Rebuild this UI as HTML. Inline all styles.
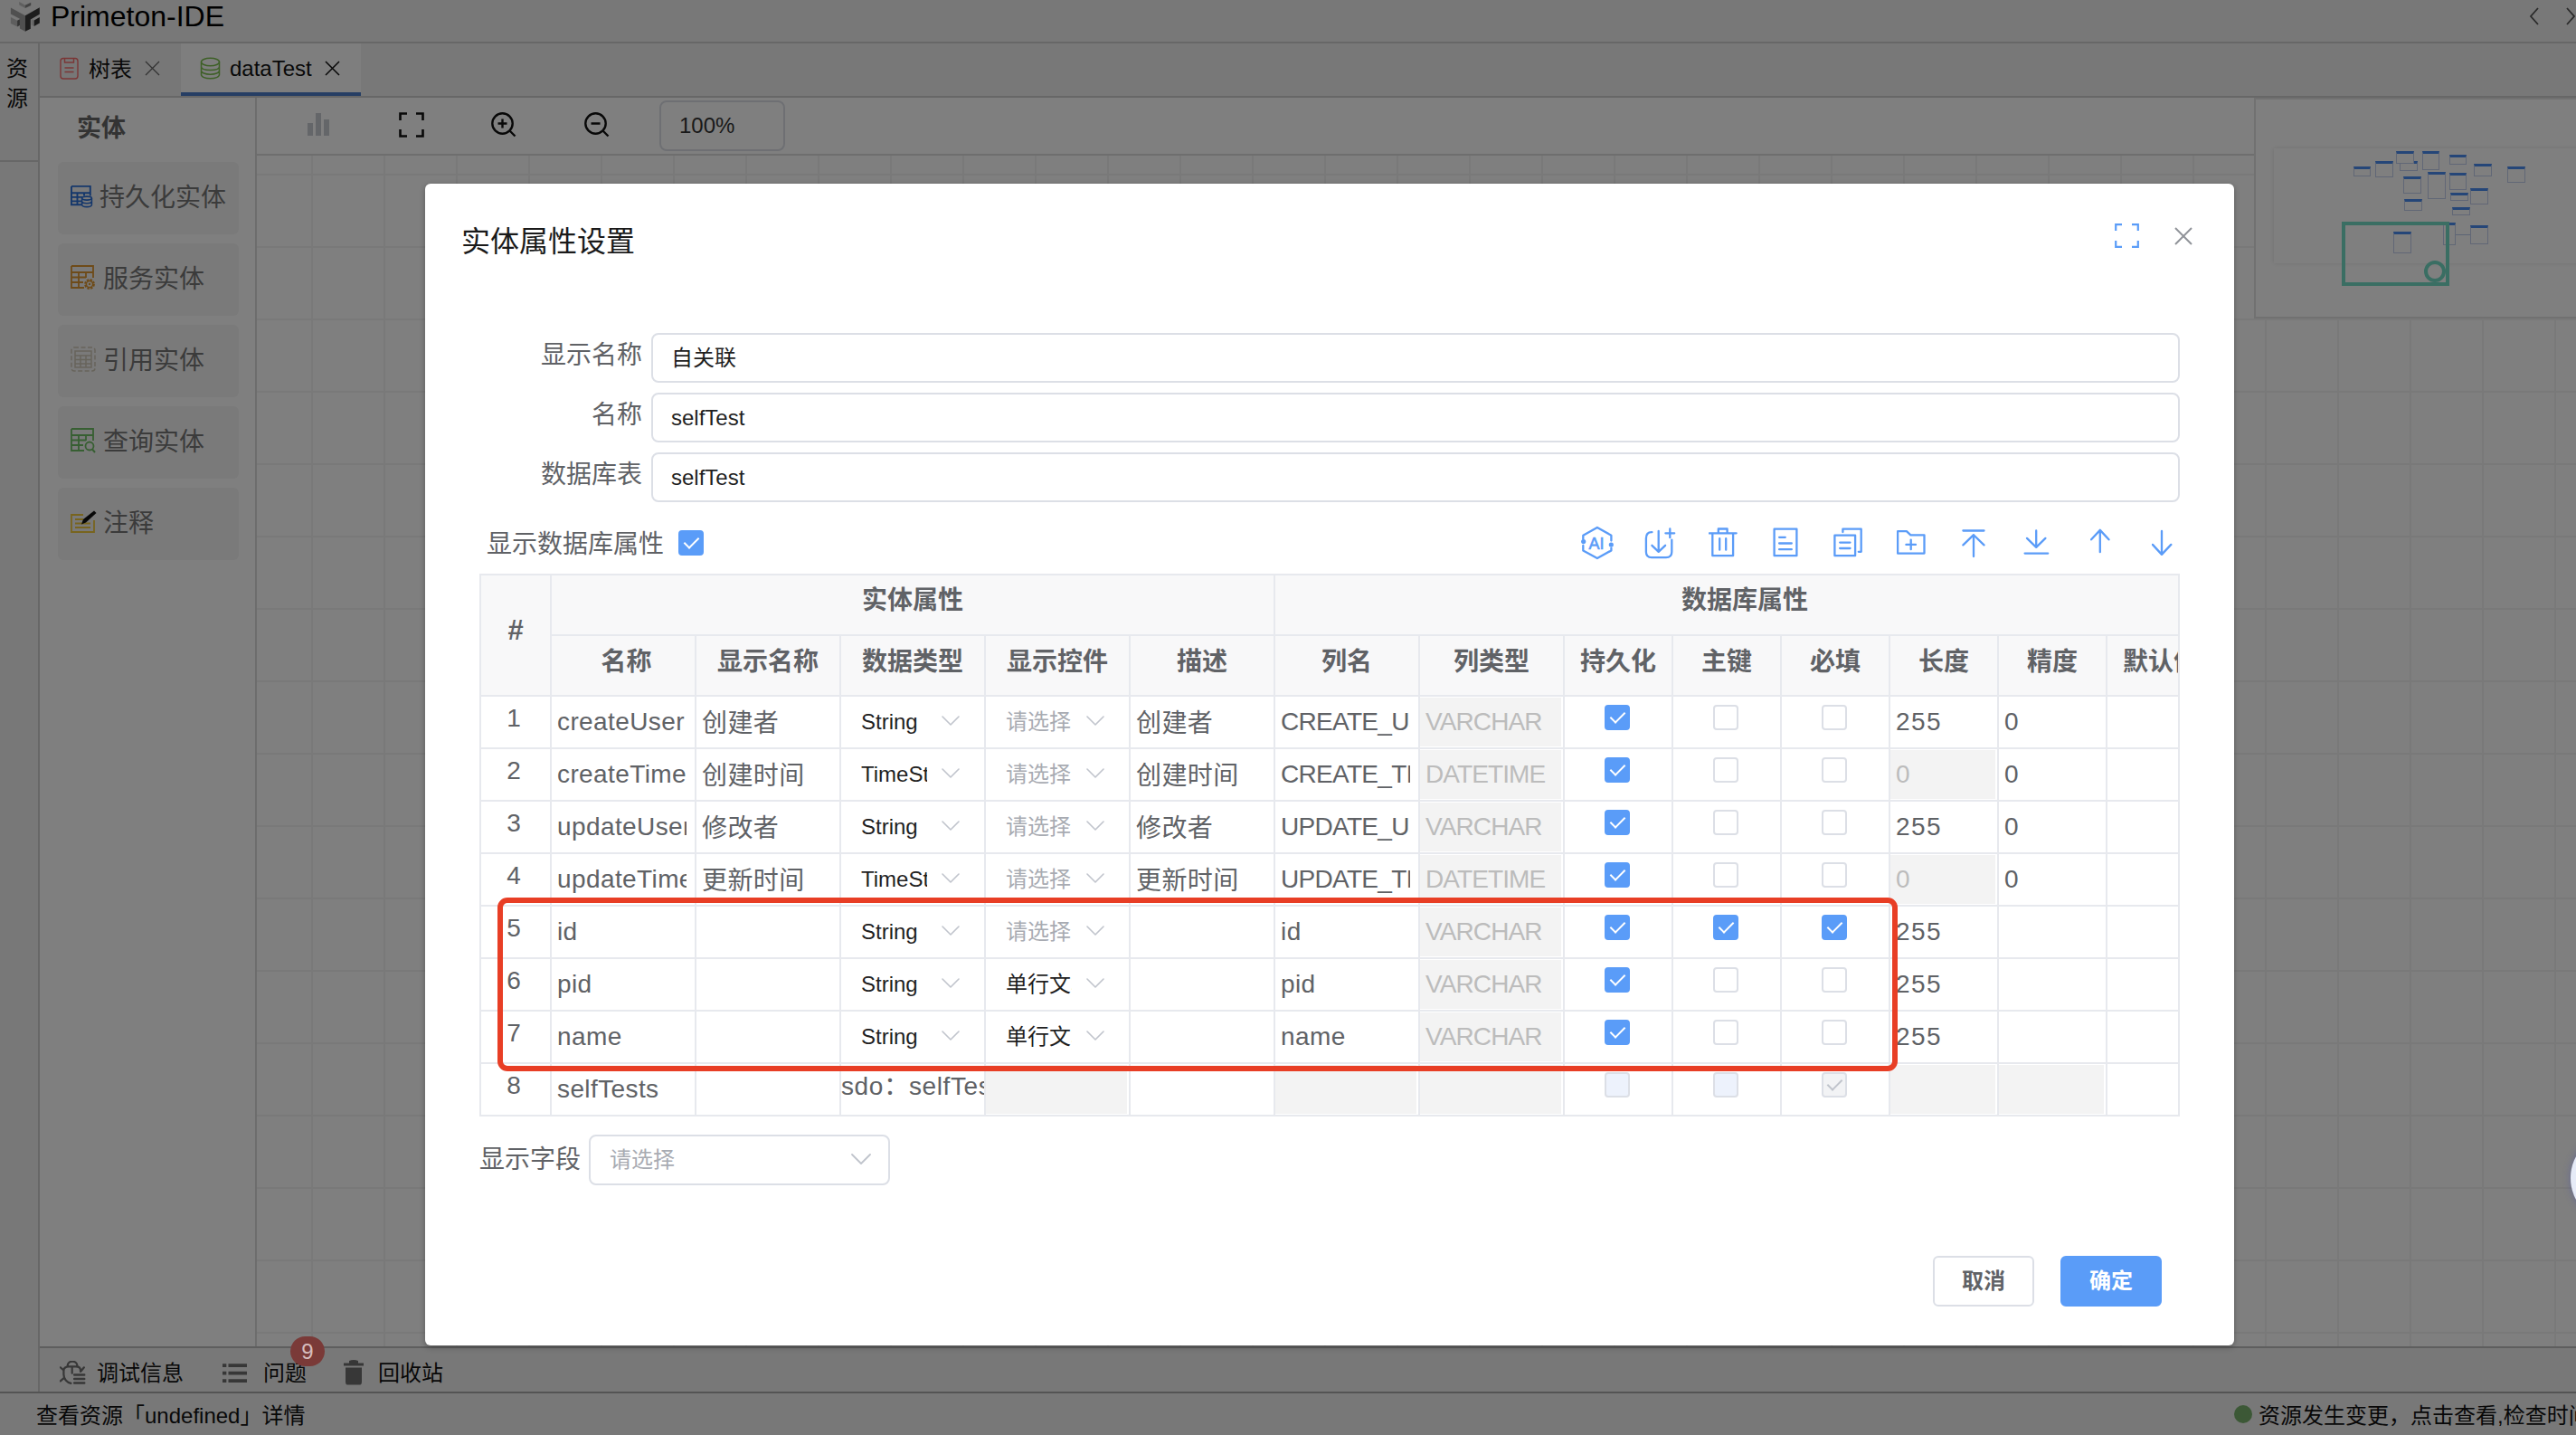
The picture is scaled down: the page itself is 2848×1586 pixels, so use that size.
<!DOCTYPE html>
<html lang="zh-CN"><head><meta charset="utf-8"><title>Primeton-IDE</title>
<style>
*{box-sizing:border-box;margin:0;padding:0}
html,body{width:2848px;height:1586px;overflow:hidden;background:#fff}
body{position:relative;font-family:"Liberation Sans","Noto Sans CJK SC",sans-serif;color:#606266;font-size:28px}
.abs{position:absolute}
#app{position:absolute;left:0;top:0;width:2848px;height:1586px;background:#fff;overflow:hidden}
#titlebar{position:absolute;left:0;top:0;width:2848px;height:48px;background:#f0f0f0;border-bottom:2px solid #cfcfcf}
#titlebar .name{position:absolute;left:56px;top:0;font-size:32px;line-height:36px;color:#000}
#strip{position:absolute;left:0;top:48px;width:44px;height:1492px;background:#f0f0f0;border-right:2px solid #cfcfcf}
#strip .tab{position:absolute;left:0;top:0;width:42px;height:131px;border-bottom:2px solid #cfcfcf;font-size:24px;line-height:33px;color:#111;padding:11px 0 0 7px}
#tabbar{position:absolute;left:44px;top:48px;width:2804px;height:60px;background:#f0f0f0;border-bottom:2px solid #cfcfcf}
.tab1{position:absolute;top:0;height:58px;font-size:24px;line-height:58px;color:#111;white-space:nowrap}
#panel{position:absolute;left:44px;top:108px;width:240px;height:1380px;background:#fff;border-right:2px solid #dadada}
#panel h3{position:absolute;left:41px;top:14px;font-size:27px;line-height:40px;font-weight:bold;color:#666}
.pitem{position:absolute;left:20px;width:200px;height:80px;background:#f4f4f4;border-radius:6px;font-size:28px;line-height:80px;color:#777;white-space:nowrap}
.pitem svg{position:absolute;left:14px;top:26px}
.pitem span{position:absolute;left:46px;top:0}
#toolbar{position:absolute;left:284px;top:108px;width:2564px;height:64px;background:#fff;border-bottom:2px solid #dcdcdc}
#zoombox{position:absolute;left:445px;top:3px;width:139px;height:56px;border:2px solid #dcdfe6;border-radius:8px;font-size:24px;line-height:52px;color:#333;padding-left:20px}
#canvas{position:absolute;left:284px;top:172px;width:2564px;height:1316px;background-color:#fff;
 background-image:linear-gradient(to right,#f3f3f3 2px,transparent 2px),linear-gradient(to bottom,#f3f3f3 2px,transparent 2px);
 background-size:80px 80px;background-position:60px 20px}
#minimap{position:absolute;left:2492px;top:108px;width:360px;height:244px;background:#fff;border:2px solid #e2e2e2}
#btabs{position:absolute;left:44px;top:1488px;width:2804px;height:52px;background:#f0f0f0;border-top:2px solid #bdbdbd;font-size:24px;color:#111}
#btabs span{position:absolute;top:12px;margin-left:-1px;line-height:32px;white-space:nowrap}
#status{position:absolute;left:0;top:1538px;width:2848px;height:48px;background:#f0f0f0;border-top:2px solid #a8a8a8;font-size:24px;color:#111}
#status span{position:absolute;top:9px;line-height:32px;white-space:nowrap}
#mask{position:absolute;left:0;top:0;width:2848px;height:1586px;background:rgba(0,0,0,.5)}
#modal{position:absolute;left:470px;top:203px;width:2000px;height:1284px;background:#fff;border-radius:6px;box-shadow:0 2px 6px rgba(0,0,0,.3)}
#modal h2{position:absolute;left:40px;top:42px;font-size:32px;line-height:44px;font-weight:normal;color:#1a1a1a;white-space:nowrap}
.flabel{position:absolute;left:0;width:240px;text-align:right;font-size:28px;line-height:48px;color:#606266;white-space:nowrap}
.finput{position:absolute;left:250px;width:1690px;height:55px;border:2px solid #dcdfe6;border-radius:8px;font-size:24px;line-height:51px;color:#1f1f1f;padding-left:20px;white-space:nowrap}
#showdb{position:absolute;left:68px;top:379px;font-size:28px;line-height:40px;color:#606266;white-space:nowrap}
.cb{display:block;width:28px;height:28px;border:2px solid #dcdfe6;border-radius:4px;background:#fff;position:relative}
.cb.on{background:#5a9cf8;border-color:#5a9cf8}
.cb.on:after,.cb.dis.chk:after{content:"";position:absolute;left:8px;top:2px;width:7px;height:14px;border:solid #fff;border-width:0 2.5px 2.5px 0;transform:rotate(45deg)}
.cb.dis{background:#edf2fc;border-color:#dcdfe6}
.cb.dis.chk{background:#f2f3f5}
.cb.dis.chk:after{border-color:#c0c4cc;border-width:0 2px 2px 0}
#icons svg{position:absolute;top:0}
#tblwrap{position:absolute;left:60px;top:431px;width:1880px;height:600px;overflow:hidden;border-left:2px solid #e7e9ee;border-top:2px solid #e7e9ee;border-right:2px solid #e7e9ee}
table{border-collapse:separate;border-spacing:0;table-layout:fixed;width:1918px}
th,td{border-right:2px solid #e7e9ee;border-bottom:2px solid #e7e9ee;padding:0;overflow:hidden;white-space:nowrap;vertical-align:top}
th{background:#f8f8f9;color:#606266;font-weight:bold;font-size:28px;text-align:center;height:67px;line-height:58px}
th.g{line-height:56px}
th.idx{line-height:122px}
td{height:58px;font-size:28px;color:#606266;position:relative}
td.idx{text-align:center;line-height:47px;padding-right:4px}
.ti{display:block;height:56px;line-height:56px;padding:0 0 0 6px;margin-right:9px;overflow:hidden;letter-spacing:.4px}
.ti.up{letter-spacing:-.7px}
.ti.num{letter-spacing:1.4px}
.ti.cj{padding-top:2px}
.ti.dis{background:#f3f3f3;color:#bcbcbc;margin:1px 2px 1px 0;height:54px;line-height:54px;letter-spacing:-.9px}
.sel{display:block;height:56px;line-height:56px;font-size:24px;color:#1f1f1f;padding-left:22px;position:relative}
.sel b{font-weight:normal;display:block;width:73px;overflow:hidden}
.sel.ph{color:#a8abb2}
.sel svg{position:absolute;left:111px;top:21px}
td .cb{position:absolute;left:44px;top:9px}
#dispfield{position:absolute;left:60px;top:1051px;font-size:28px;line-height:56px;color:#606266;white-space:nowrap}
#dfsel{position:absolute;left:181px;top:1051px;width:333px;height:56px;border:2px solid #dcdfe6;border-radius:8px;font-size:24px;line-height:52px;color:#a8abb2;padding-left:21px}
.btn{position:absolute;top:1185px;width:112px;height:56px;border-radius:6px;font-size:24px;line-height:52px;text-align:center;font-weight:bold;border:2px solid #dcdfe6;color:#606266;background:#fff}
.btn.pri{background:#5a9cf8;border-color:#5a9cf8;color:#fff}
#redbox{position:absolute;left:550px;top:992px;width:1548px;height:192px;border:6px solid #e83e25;border-radius:11px}
.mb{position:absolute;background:#fff;border:1px solid #c2cfec;border-top:3px solid #4a8cf0}
#badge{position:absolute;left:321px;top:1477px;width:38px;height:33px;border-radius:17px;background:#7a3a38;color:#d6bcbc;font-size:24px;line-height:34px;text-align:center}
#floatbtn{position:absolute;left:2842px;top:1252px;width:100px;height:100px;border-radius:50px;background:#e6ebf7;box-shadow:0 0 8px rgba(70,80,170,.45)}
</style></head>
<body>
<div id="app">
<div id="titlebar">
<svg class="abs" style="left:0;top:0" width="48" height="40" viewBox="0 0 48 40">
<polygon points="11.900,8.600 27.900,17.200 27.900,34.700 21.900,31.400 21.900,20.700 11.900,15.400" fill="#a0a0a0"/>
<polygon points="11.900,19.100 19.100,22.800 19.100,29.600 11.900,25.900" fill="#bcbcbc"/>
<polygon points="19.100,22.800 21.900,21.200 21.900,27.900 19.100,29.600" fill="#666"/>
<polygon points="27.900,17.200 43.800,8.200 43.800,15.800 33.800,21.400 33.800,31.700 27.900,34.700" fill="#3a3a3a"/>
<polygon points="34.700,21 37.700,22.400 37.700,29.100 34.700,27.500" fill="#d0d0d0"/>
<polygon points="37.700,22.400 43.800,18.900 43.800,25.400 37.700,28.900" fill="#333"/>
<polygon points="21.200,2.100 27.900,5.800 27.900,9.100 21.200,5.400" fill="#bebebe"/>
<polygon points="27.900,5.800 34.200,2.800 34.200,6.100 27.900,9.100" fill="#868686"/>
</svg>
<div class="name">Primeton-IDE</div>
<svg class="abs" style="left:2796px;top:8px" width="12" height="20" viewBox="0 0 12 20"><path d="M10 1 L2 10 L10 19" fill="none" stroke="#555" stroke-width="1.8"/></svg>
<svg class="abs" style="left:2836px;top:8px" width="12" height="20" viewBox="0 0 12 20"><path d="M2 1 L10 10 L2 19" fill="none" stroke="#555" stroke-width="1.8"/></svg>
</div>
<div id="strip"><div class="tab">资<br>源</div></div>
<div id="tabbar">
<div class="tab1" style="left:0;width:156px;background:#eee">
<svg class="abs" style="left:22px;top:15px" width="21" height="25" viewBox="0 0 21 25"><rect x="1" y="1.500" width="19" height="22.500" rx="3" fill="none" stroke="#f56c6c" stroke-width="1.400"/><path d="M5.500 1.500 V6 H15.500 V1.500 M5.500 12 H15.500 M5.500 16.500 H15.500" fill="none" stroke="#f56c6c" stroke-width="1.400"/></svg>
<span class="abs" style="left:54px;top:0">树表</span>
<svg class="abs" style="left:116px;top:19px" width="17" height="17" viewBox="0 0 17 17"><path d="M1 1 L16 16 M16 1 L1 16" stroke="#666" stroke-width="1.300"/></svg>
</div>
<div class="tab1" style="left:156px;width:199px;background:#fdfdfd;border-bottom:4px solid #4c7cc8;height:58px">
<svg class="abs" style="left:21px;top:15px" width="23" height="25" viewBox="0 0 23 25"><ellipse cx="11.5" cy="5.5" rx="10" ry="4.2" fill="none" stroke="#7cc04f" stroke-width="1.500"/><path d="M1.5 5.5 V19.5 C1.5 22 6 23.8 11.5 23.8 S21.500 22 21.5 19.5 V5.500 M1.5 10.500 C1.5 13 6 14.500 11.5 14.500 S21.500 13 21.5 10.500 M1.5 15 C1.5 17.500 6 19.200 11.5 19.200 S21.500 17.500 21.5 15" fill="none" stroke="#7cc04f" stroke-width="1.500"/></svg>
<span class="abs" style="left:54px;top:-1px">dataTest</span>
<svg class="abs" style="left:159px;top:19px" width="17" height="17" viewBox="0 0 17 17"><path d="M1 1 L16 16 M16 1 L1 16" stroke="#111" stroke-width="1.500"/></svg>
</div>
</div>
<div id="panel">
<h3>实体</h3>
<div class="pitem" style="top:71px">
<svg width="25" height="26" viewBox="0 0 25 26" style="left:14px;top:25px"><path d="M1 1.900 H21.800 V12.500 M1 1.900 V22.200 H12 M1 9.300 H21.800 M1 13.900 H13 M1 18.400 H12 M7.500 9.300 V22.200 M15 9.300 V12.500" fill="none" stroke="#2a6fd6" stroke-width="1.900"/><ellipse cx="18" cy="15.100" rx="5.400" ry="2" fill="none" stroke="#2a6fd6" stroke-width="1.600"/><path d="M12.600 15.100 V22.300 C12.600 23.600 15 24.600 18 24.600 S23.400 23.600 23.400 22.300 V15.100 M12.600 18.600 C12.600 19.900 15 20.800 18 20.800 S23.400 19.900 23.400 18.600" fill="none" stroke="#2a6fd6" stroke-width="1.600"/></svg>
<span style="left:46px">持久化实体</span></div>
<div class="pitem" style="top:161px">
<svg width="28" height="28" viewBox="0 0 28 28" style="left:14px;top:24px"><path d="M1 1 H25 V14 M1 1 V25 H15 M1 8 H25 M1 13.500 H17 M1 19 H14 M9 8 V25 M17 8 V14" fill="none" stroke="#dc9632" stroke-width="1.800"/><circle cx="21" cy="21" r="4.600" fill="none" stroke="#dc9632" stroke-width="2.600" stroke-dasharray="2.400 1.200"/><circle cx="21" cy="21" r="3.600" fill="none" stroke="#dc9632" stroke-width="1.500"/><circle cx="21" cy="21" r="1.200" fill="#dc9632"/></svg>
<span style="left:50px">服务实体</span></div>
<div class="pitem" style="top:251px">
<svg width="28" height="28" viewBox="0 0 28 28" style="left:14px;top:24px"><rect x="1" y="1" width="26" height="26" rx="3" fill="none" stroke="#cfc8b6" stroke-width="1.500" stroke-dasharray="5 2.500"/><path d="M5 5 H23 V23 H5 Z M5 10 H23 M5 14.500 H23 M5 19 H23 M11 10 V23 M17 10 V23" fill="none" stroke="#cfc8b6" stroke-width="1.500"/></svg>
<span style="left:50px">引用实体</span></div>
<div class="pitem" style="top:341px">
<svg width="28" height="28" viewBox="0 0 28 28" style="left:14px;top:24px"><path d="M1 1 H25 V14 M1 1 V25 H15 M1 8 H25 M1 13.500 H17 M1 19 H14 M9 8 V25 M17 8 V14" fill="none" stroke="#6ebe64" stroke-width="1.800"/><circle cx="21" cy="20" r="4.500" fill="none" stroke="#6ebe64" stroke-width="1.800"/><path d="M24 23.500 L27 27" stroke="#6ebe64" stroke-width="2"/></svg>
<span style="left:50px">查询实体</span></div>
<div class="pitem" style="top:431px">
<svg width="30" height="28" viewBox="0 0 30 28" style="left:14px;top:24px"><path d="M14 6 H1 V25 H26 V12 M5 11 H14 M5 15.500 H22 M5 20 H22" fill="none" stroke="#f0c83c" stroke-width="1.800"/><path d="M12 16.500 L14 11 L26 1.500 L28.500 4 L17 14.500 Z" fill="#111"/></svg>
<span style="left:50px">注释</span></div>
</div>
<div id="toolbar">
<svg class="abs" style="left:56px;top:17px" width="25" height="26" viewBox="0 0 25 26"><path d="M0 11 H6 V25 H0 Z M9 0 H15 V25 H9 Z M18 7 H24 V25 H18 Z" fill="#c9ccd2"/></svg>
<svg class="abs" style="left:157px;top:16px" width="28" height="28" viewBox="0 0 28 28"><path d="M1.500 9 V1.500 H9 M19 1.500 H26.500 V9 M26.500 19 V26.500 H19 M9 26.500 H1.500 V19" fill="none" stroke="#111" stroke-width="2.600"/></svg>
<svg class="abs" style="left:259px;top:16px" width="28" height="28" viewBox="0 0 28 28"><circle cx="12.500" cy="12.500" r="11.200" fill="none" stroke="#111" stroke-width="2.400"/><path d="M20.500 20.500 L26.500 26.500 M7.500 12.500 H17.500 M12.500 7.500 V17.500" stroke="#111" stroke-width="2.400"/></svg>
<svg class="abs" style="left:362px;top:16px" width="28" height="28" viewBox="0 0 28 28"><circle cx="12.500" cy="12.500" r="11.200" fill="none" stroke="#111" stroke-width="2.400"/><path d="M20.500 20.500 L26.500 26.500 M7.500 12.500 H17.500" stroke="#111" stroke-width="2.400"/></svg>
<div id="zoombox">100%</div>
</div>
<div id="canvas"></div>
<div id="minimap">
<div class="abs" style="left:20px;top:54px;width:340px;height:127px;background:#fff;box-shadow:0 0 5px rgba(0,0,0,.12)"></div>
<div class="mb" style="left:107.9px;top:74.4px;width:19.6px;height:11.1px"></div>
<div class="mb" style="left:132.4px;top:67.9px;width:19.9px;height:18.3px"></div>
<div class="mb" style="left:159.4px;top:67.9px;width:19.2px;height:10.7px"></div>
<div class="mb" style="left:155.4px;top:57.4px;width:19.9px;height:14.1px"></div>
<div class="mb" style="left:183.5px;top:57.4px;width:19.9px;height:20.8px"></div>
<div class="mb" style="left:213.6px;top:61.0px;width:19.7px;height:11.4px"></div>
<div class="mb" style="left:241.1px;top:71.2px;width:19.6px;height:13.4px"></div>
<div class="mb" style="left:278.1px;top:73.5px;width:19.6px;height:18.3px"></div>
<div class="mb" style="left:163.2px;top:84.9px;width:19.6px;height:18.7px"></div>
<div class="mb" style="left:190.2px;top:79.7px;width:19.6px;height:29.9px"></div>
<div class="mb" style="left:213.6px;top:81.3px;width:19.7px;height:18.3px"></div>
<div class="mb" style="left:215.0px;top:103.1px;width:19.6px;height:9.4px"></div>
<div class="mb" style="left:237.3px;top:98.4px;width:19.7px;height:18.1px"></div>
<div class="mb" style="left:164.1px;top:110.1px;width:19.6px;height:13.4px"></div>
<div class="mb" style="left:217.0px;top:119.0px;width:19.6px;height:8.7px"></div>
<div class="mb" style="left:152.2px;top:146.2px;width:19.6px;height:23.4px"></div>
<div class="mb" style="left:206.7px;top:136.0px;width:14.1px;height:25.4px"></div>
<div class="mb" style="left:237.3px;top:139.3px;width:19.7px;height:21.2px"></div>
<div class="abs" style="left:220.8px;top:149.4px;width:16.5px;height:1px;background:#b8c8e8"></div>
<div class="abs" style="left:95px;top:135px;width:119px;height:71px;border:4px solid #74dcc6"></div>
<div class="abs" style="left:186px;top:178px;width:24px;height:24px;border:4px solid #74dcc6;border-radius:12px"></div>
</div>
<div id="btabs">
<svg class="abs" style="left:22px;top:14px" width="30" height="28" viewBox="0 0 30 28"><path d="M8.600 5.600 C9 -1 19 -1 19.500 5.600 M23 12 V10.500 C23 7.500 21 6.300 18 6.300 H10 C6 6.300 4.400 8 4.400 11 V15 C4.400 20 8 24 12.400 24.800 M13.700 7 V13.700 M0.800 7.300 L4.400 10.500 M0.800 22.400 L5.200 18.600 M26.900 7.300 L23.300 11.800" fill="none" stroke="#6e6e6e" stroke-width="2.200" stroke-linecap="round"/><path d="M16.200 15.600 H27.200 M16.200 20.100 H27.200 M16.200 24.600 H27.200" stroke="#6e6e6e" stroke-width="2.500" stroke-linecap="round"/></svg>
<span style="left:64px">调试信息</span>
<svg class="abs" style="left:202px;top:16px" width="28" height="24" viewBox="0 0 28 24"><path d="M0 3.200 H4.300 M6.500 3.200 H27 M0 11.600 H4.300 M6.500 11.600 H27 M0 20.200 H4.300 M6.500 20.200 H27" stroke="#6e6e6e" stroke-width="3.700"/></svg>
<span style="left:248px">问题</span>
<svg class="abs" style="left:336px;top:13px" width="22" height="28" viewBox="0 0 22 28"><path d="M0 3.500 H22 V6.500 H0 Z M6 1 Q11 -1 16 1 V3.500 H6 Z M2 8.500 H20 V24 C20 27 19 27.500 17 27.500 H5 C3 27.500 2 27 2 24 Z" fill="#6e6e6e"/></svg>
<span style="left:375px">回收站</span>
</div>
<div id="status">
<span style="left:40px">查看资源「undefined」详情</span>
<i class="abs" style="left:2470px;top:13px;width:20px;height:20px;border-radius:10px;background:#78b06c"></i>
<span style="left:2497px">资源发生变更，点击查看,检查时间：</span>
</div>
</div>

<div id="mask"></div>

<div id="modal">
<h2>实体属性设置</h2>
<svg class="abs" style="left:1868px;top:44px" width="27" height="27" viewBox="0 0 27 27"><path d="M1.200 8 V1.200 H8 M19 1.200 H25.800 V8 M25.800 19 V25.800 H19 M8 25.800 H1.200 V19" fill="none" stroke="#5a9cf8" stroke-width="2.200"/></svg>
<svg class="abs" style="left:1934px;top:48px" width="20" height="20" viewBox="0 0 20 20"><path d="M1 1 L19 19 M19 1 L1 19" stroke="#909399" stroke-width="2"/></svg>
<div id="icons" class="abs" style="left:0;top:380px;width:2000px;height:40px">
<svg style="left:1277px;top:-2px" width="38" height="38" viewBox="0 0 38 38"><path d="M3.3 15 V10.7 L18.9 1.9 L34.4 10.7 V16.500 M34.4 25 V27.400 L18.900 36.100 L3.300 27.400 V22" fill="none" stroke="#5b9cf8" stroke-width="2.3" stroke-linecap="round" stroke-linejoin="round"/><circle cx="3.700" cy="17.600" r="2.600" fill="#5b9cf8"/><circle cx="34.300" cy="21.100" r="2.600" fill="#5b9cf8"/><text x="9.500" y="25.600" font-family="Liberation Sans,sans-serif" font-size="18" font-weight="normal" stroke="#5b9cf8" stroke-width=".6" fill="#5b9cf8">AI</text></svg>
<svg style="left:1348px;top:0px" width="36" height="36" viewBox="0 0 36 36"><path d="M8.400 5.200 H8 Q1.900 5.200 1.900 12 V27 Q1.900 33.100 8 33.100 H24 Q30.300 33.100 30.300 27 V13.600 M15.700 4 V26.800 M8.400 19.800 L15.700 26.800 L23.100 19.800 M23.400 6.300 H33.200 M28.300 1.400 V11.200" fill="none" stroke="#5b9cf8" stroke-width="2.3" stroke-linecap="round" stroke-linejoin="round"/></svg>
<svg style="left:1419px;top:0px" width="32" height="33" viewBox="0 0 32 33"><path d="M0.800 6.300 H30.700 M10.800 6.300 V1.500 H20.600 V6.300 M4.300 6.300 V31.200 H27.100 V6.300 M12.200 12.200 V24.700 M19.200 12.200 V24.700" fill="none" stroke="#5b9cf8" stroke-width="2.3" stroke-linecap="round" stroke-linejoin="round"/></svg>
<svg style="left:1490px;top:0px" width="29" height="33" viewBox="0 0 29 33"><path d="M1.600 1.700 H26.400 V31.200 H1.600 Z M7.100 10.800 H13.800 M7.100 17.500 H20.800 M7.100 24.200 H20.800" fill="none" stroke="#5b9cf8" stroke-width="2.3" stroke-linecap="round" stroke-linejoin="round"/></svg>
<svg style="left:1557px;top:0px" width="33" height="33" viewBox="0 0 33 33"><path d="M1.400 8.700 H24.100 V31.200 H1.400 Z M10.400 5 V1.700 H30.700 V26.800 H27.800 M7.200 16.600 H18.500 M7.200 23 H18.500" fill="none" stroke="#5b9cf8" stroke-width="2.3" stroke-linecap="round" stroke-linejoin="round"/></svg>
<svg style="left:1627px;top:0px" width="33" height="33" viewBox="0 0 33 33"><path d="M1.100 4.100 H10.900 L15.400 8.400 H30.500 V28.600 H1.100 Z M10.400 18.900 H21 M15.700 13.600 V24.200" fill="none" stroke="#5b9cf8" stroke-width="2.3" stroke-linecap="round" stroke-linejoin="round"/></svg>
<svg style="left:1699px;top:0px" width="27" height="34" viewBox="0 0 27 34"><path d="M1.400 3.500 H24.500 M13 8.200 V32 M1.400 19.400 L13 8.200 L24.500 19.400" fill="none" stroke="#5b9cf8" stroke-width="2.3" stroke-linecap="round" stroke-linejoin="round"/></svg>
<svg style="left:1767px;top:0px" width="30" height="33" viewBox="0 0 30 33"><path d="M14.200 3.500 V21.900 M4 11.900 L14.200 21.900 L24.400 11.900 M1.600 28.600 H27.200" fill="none" stroke="#5b9cf8" stroke-width="2.3" stroke-linecap="round" stroke-linejoin="round"/></svg>
<svg style="left:1841px;top:0px" width="23" height="33" viewBox="0 0 23 33"><path d="M10.800 2.900 V27.200 M1.100 13.300 L10.800 2.900 L20.500 13.300" fill="none" stroke="#5b9cf8" stroke-width="2.3" stroke-linecap="round" stroke-linejoin="round"/></svg>
<svg style="left:1909px;top:0px" width="24" height="33" viewBox="0 0 24 33"><path d="M11 4 V29.800 M0.900 18.900 L11 29.900 L21.300 18.900" fill="none" stroke="#5b9cf8" stroke-width="2.3" stroke-linecap="round" stroke-linejoin="round"/></svg>
</div>

<div class="flabel" style="top:166px">显示名称</div><div class="finput" style="top:165px">自关联</div>
<div class="flabel" style="top:232px">名称</div><div class="finput" style="top:231px">selfTest</div>
<div class="flabel" style="top:298px">数据库表</div><div class="finput" style="top:297px">selfTest</div>
<div id="showdb">显示数据库属性</div><i class="cb on abs" style="left:280px;top:383px"></i>
<div id="tblwrap">
<table><colgroup><col style="width:78px"><col style="width:160px"><col style="width:160px"><col style="width:160px"><col style="width:160px"><col style="width:160px"><col style="width:160px"><col style="width:160px"><col style="width:120px"><col style="width:120px"><col style="width:120px"><col style="width:120px"><col style="width:120px"><col style="width:120px"></colgroup>
<thead><tr><th class="idx" rowspan="2"><span style="font-size:31px">#</span></th><th class="g" colspan="5">实体属性</th><th class="g" colspan="8">数据库属性</th></tr>
<tr><th style="padding-left:7px">名称</th><th>显示名称</th><th>数据类型</th><th>显示控件</th><th>描述</th><th>列名</th><th>列类型</th><th>持久化</th><th>主键</th><th>必填</th><th>长度</th><th>精度</th><th>默认值</th></tr></thead><tbody>
<tr><td class="idx">1</td><td><span class="ti">createUser</span></td><td><span class="ti cj">创建者</span></td><td><span class="sel"><b>String</b><svg width="20" height="11" viewBox="0 0 20 11"><path d="M1 1 L10.0 10 L19 1" fill="none" stroke="#c0c4cc" stroke-width="1.6" stroke-linecap="round" stroke-linejoin="round"/></svg></span></td><td><span class="sel ph"><b>请选择</b><svg width="20" height="11" viewBox="0 0 20 11"><path d="M1 1 L10.0 10 L19 1" fill="none" stroke="#c0c4cc" stroke-width="1.6" stroke-linecap="round" stroke-linejoin="round"/></svg></span></td><td><span class="ti cj">创建者</span></td><td><span class="ti up">CREATE_USER</span></td><td><span class="ti dis">VARCHAR</span></td><td><i class="cb on"></i></td><td><i class="cb"></i></td><td><i class="cb"></i></td><td><span class="ti num">255</span></td><td><span class="ti num">0</span></td><td></td></tr>
<tr><td class="idx">2</td><td><span class="ti">createTime</span></td><td><span class="ti cj">创建时间</span></td><td><span class="sel"><b>TimeStamp</b><svg width="20" height="11" viewBox="0 0 20 11"><path d="M1 1 L10.0 10 L19 1" fill="none" stroke="#c0c4cc" stroke-width="1.6" stroke-linecap="round" stroke-linejoin="round"/></svg></span></td><td><span class="sel ph"><b>请选择</b><svg width="20" height="11" viewBox="0 0 20 11"><path d="M1 1 L10.0 10 L19 1" fill="none" stroke="#c0c4cc" stroke-width="1.6" stroke-linecap="round" stroke-linejoin="round"/></svg></span></td><td><span class="ti cj">创建时间</span></td><td><span class="ti up">CREATE_TIME</span></td><td><span class="ti dis">DATETIME</span></td><td><i class="cb on"></i></td><td><i class="cb"></i></td><td><i class="cb"></i></td><td><span class="ti dis">0</span></td><td><span class="ti num">0</span></td><td></td></tr>
<tr><td class="idx">3</td><td><span class="ti">updateUser</span></td><td><span class="ti cj">修改者</span></td><td><span class="sel"><b>String</b><svg width="20" height="11" viewBox="0 0 20 11"><path d="M1 1 L10.0 10 L19 1" fill="none" stroke="#c0c4cc" stroke-width="1.6" stroke-linecap="round" stroke-linejoin="round"/></svg></span></td><td><span class="sel ph"><b>请选择</b><svg width="20" height="11" viewBox="0 0 20 11"><path d="M1 1 L10.0 10 L19 1" fill="none" stroke="#c0c4cc" stroke-width="1.6" stroke-linecap="round" stroke-linejoin="round"/></svg></span></td><td><span class="ti cj">修改者</span></td><td><span class="ti up">UPDATE_USER</span></td><td><span class="ti dis">VARCHAR</span></td><td><i class="cb on"></i></td><td><i class="cb"></i></td><td><i class="cb"></i></td><td><span class="ti num">255</span></td><td><span class="ti num">0</span></td><td></td></tr>
<tr><td class="idx">4</td><td><span class="ti">updateTime</span></td><td><span class="ti cj">更新时间</span></td><td><span class="sel"><b>TimeStamp</b><svg width="20" height="11" viewBox="0 0 20 11"><path d="M1 1 L10.0 10 L19 1" fill="none" stroke="#c0c4cc" stroke-width="1.6" stroke-linecap="round" stroke-linejoin="round"/></svg></span></td><td><span class="sel ph"><b>请选择</b><svg width="20" height="11" viewBox="0 0 20 11"><path d="M1 1 L10.0 10 L19 1" fill="none" stroke="#c0c4cc" stroke-width="1.6" stroke-linecap="round" stroke-linejoin="round"/></svg></span></td><td><span class="ti cj">更新时间</span></td><td><span class="ti up">UPDATE_TIME</span></td><td><span class="ti dis">DATETIME</span></td><td><i class="cb on"></i></td><td><i class="cb"></i></td><td><i class="cb"></i></td><td><span class="ti dis">0</span></td><td><span class="ti num">0</span></td><td></td></tr>
<tr><td class="idx">5</td><td><span class="ti">id</span></td><td><span class="ti cj"></span></td><td><span class="sel"><b>String</b><svg width="20" height="11" viewBox="0 0 20 11"><path d="M1 1 L10.0 10 L19 1" fill="none" stroke="#c0c4cc" stroke-width="1.6" stroke-linecap="round" stroke-linejoin="round"/></svg></span></td><td><span class="sel ph"><b>请选择</b><svg width="20" height="11" viewBox="0 0 20 11"><path d="M1 1 L10.0 10 L19 1" fill="none" stroke="#c0c4cc" stroke-width="1.6" stroke-linecap="round" stroke-linejoin="round"/></svg></span></td><td><span class="ti cj"></span></td><td><span class="ti">id</span></td><td><span class="ti dis">VARCHAR</span></td><td><i class="cb on"></i></td><td><i class="cb on"></i></td><td><i class="cb on"></i></td><td><span class="ti num">255</span></td><td><span class="ti num"></span></td><td></td></tr>
<tr><td class="idx">6</td><td><span class="ti">pid</span></td><td><span class="ti cj"></span></td><td><span class="sel"><b>String</b><svg width="20" height="11" viewBox="0 0 20 11"><path d="M1 1 L10.0 10 L19 1" fill="none" stroke="#c0c4cc" stroke-width="1.6" stroke-linecap="round" stroke-linejoin="round"/></svg></span></td><td><span class="sel"><b>单行文本</b><svg width="20" height="11" viewBox="0 0 20 11"><path d="M1 1 L10.0 10 L19 1" fill="none" stroke="#c0c4cc" stroke-width="1.6" stroke-linecap="round" stroke-linejoin="round"/></svg></span></td><td><span class="ti cj"></span></td><td><span class="ti">pid</span></td><td><span class="ti dis">VARCHAR</span></td><td><i class="cb on"></i></td><td><i class="cb"></i></td><td><i class="cb"></i></td><td><span class="ti num">255</span></td><td><span class="ti num"></span></td><td></td></tr>
<tr><td class="idx">7</td><td><span class="ti">name</span></td><td><span class="ti cj"></span></td><td><span class="sel"><b>String</b><svg width="20" height="11" viewBox="0 0 20 11"><path d="M1 1 L10.0 10 L19 1" fill="none" stroke="#c0c4cc" stroke-width="1.6" stroke-linecap="round" stroke-linejoin="round"/></svg></span></td><td><span class="sel"><b>单行文本</b><svg width="20" height="11" viewBox="0 0 20 11"><path d="M1 1 L10.0 10 L19 1" fill="none" stroke="#c0c4cc" stroke-width="1.6" stroke-linecap="round" stroke-linejoin="round"/></svg></span></td><td><span class="ti cj"></span></td><td><span class="ti">name</span></td><td><span class="ti dis">VARCHAR</span></td><td><i class="cb on"></i></td><td><i class="cb"></i></td><td><i class="cb"></i></td><td><span class="ti num">255</span></td><td><span class="ti num"></span></td><td></td></tr>
<tr><td class="idx">8</td><td><span class="ti">selfTests</span></td><td><span class="ti"></span></td><td><span class="ti" style="padding-left:0;margin-right:0;line-height:50px;letter-spacing:.6px">sdo：<span style="margin-left:-9px"> selfTest</span></span></td><td><span class="ti dis"></span></td><td><span class="ti"></span></td><td><span class="ti dis"></span></td><td><span class="ti dis"></span></td><td><i class="cb dis"></i></td><td><i class="cb dis"></i></td><td><i class="cb dis chk"></i></td><td><span class="ti dis"></span></td><td><span class="ti dis"></span></td><td></td></tr>
</tbody></table>
</div>
<div id="dispfield">显示字段</div>
<div id="dfsel">请选择<span class="abs" style="left:288px;top:19px;line-height:0"><svg width="22" height="12" viewBox="0 0 22 12"><path d="M1 1 L11.0 11 L21 1" fill="none" stroke="#c0c4cc" stroke-width="1.8" stroke-linecap="round" stroke-linejoin="round"/></svg></span></div>
<div class="btn" style="left:1667px">取消</div>
<div class="btn pri" style="left:1808px">确定</div>
</div>
<div id="redbox"></div>
<div id="floatbtn"></div>
<div id="badge">9</div>

</body></html>
